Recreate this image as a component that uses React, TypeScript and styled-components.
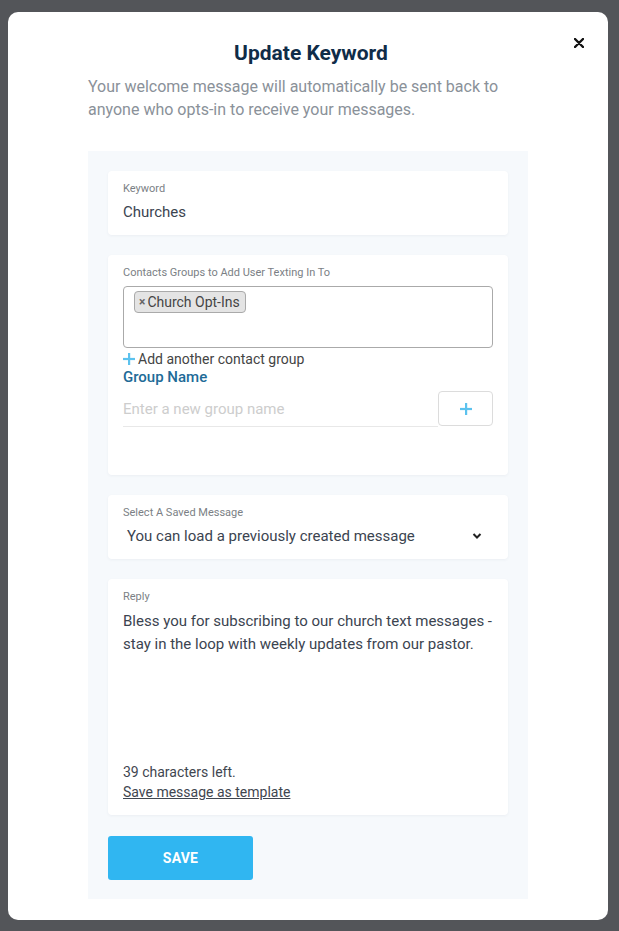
import React from 'react';
import styled, { createGlobalStyle } from 'styled-components';

const GlobalStyle = createGlobalStyle`
  html, body {
    margin: 0;
    padding: 0;
    background: #535559;
    font-family: Roboto, 'Liberation Sans', Arial, sans-serif;
  }
  * { box-sizing: border-box; }
`;

const Backdrop = styled.div`
  padding: 12px 11px 11px 8px;
  min-height: 931px;
`;

const Modal = styled.div`
  position: relative;
  width: 600px;
  height: 908px;
  background: #fff;
  border-radius: 10px;
  padding: 28px 80px 0;
`;

const CloseButton = styled.button`
  position: absolute;
  top: 24px;
  right: 22px;
  width: 14px;
  height: 14px;
  padding: 0;
  border: none;
  background: none;
  display: flex;
  align-items: center;
  justify-content: center;
`;

const Title = styled.h2`
  margin: 0 0 9px;
  text-align: center;
  font-size: 21px;
  line-height: 26px;
  font-weight: 700;
  color: #0f2c48;
  padding-left: 6px;
`;

const Subtitle = styled.p`
  margin: 0 0 30px;
  font-size: 16px;
  line-height: 23px;
  color: #8a9199;
`;

const Panel = styled.div`
  background: #f6f9fc;
  padding: 20px 20px 19px;
  display: flex;
  flex-direction: column;
  gap: 20px;
`;

const Card = styled.div`
  background: #fff;
  border-radius: 4px;
  box-shadow: 0 1px 3px rgba(30, 50, 80, 0.05);
  padding: 11px 15px 13px;
`;

const Label = styled.div`
  font-size: 11px;
  line-height: 14px;
  color: #7b7f85;
  margin-bottom: 6px;
`;

const ValueInput = styled.input`
  display: block;
  width: 100%;
  border: none;
  outline: none;
  padding: 0;
  font-family: inherit;
  font-size: 15px;
  line-height: 20px;
  height: 20px;
  color: #3b4450;
  background: transparent;
`;

const MultiBox = styled.div`
  height: 62px;
  border: 1px solid #aaa;
  border-radius: 4px;
  padding: 4px 10px;
  display: flex;
  align-items: flex-start;
`;

const Chip = styled.span`
  display: inline-flex;
  align-items: center;
  height: 22px;
  padding: 0 5px 0 4px;
  background: #e4e4e4;
  border: 1px solid #aaa;
  border-radius: 4px;
  font-size: 14px;
  color: #444;
  gap: 2px;
`;

const ChipRemove = styled.span`
  font-size: 12px;
  font-weight: 700;
  color: #666;
`;

const AddLink = styled.div`
  display: flex;
  align-items: center;
  gap: 3px;
  margin-top: 2px;
  font-size: 14px;
  line-height: 18px;
  color: #444;
`;

const GroupTitle = styled.div`
  font-size: 15px;
  line-height: 18px;
  font-weight: 500;
  color: #216a97;
  margin-bottom: 5px;
`;

const GroupRow = styled.div`
  display: flex;
  align-items: stretch;
  height: 36px;
  margin-bottom: 35px;
`;

const GroupInput = styled.input`
  flex: 1;
  border: none;
  border-bottom: 1px solid #e8e8e8;
  outline: none;
  padding: 0;
  font-family: inherit;
  font-size: 15px;
  color: #333;
  background: transparent;
  &::placeholder {
    color: #cdcdcd;
  }
`;

const AddButton = styled.button`
  width: 55px;
  height: 35px;
  background: #fff;
  border: 1px solid #dcdcdc;
  border-radius: 4px;
  display: flex;
  align-items: center;
  justify-content: center;
  padding: 0;
`;

const SelectBox = styled.div`
  display: flex;
  align-items: center;
  justify-content: space-between;
  padding: 0 11px 0 4px;
  height: 20px;
  font-size: 15px;
  color: #3b4450;
`;

const ReplyText = styled.div`
  font-size: 15px;
  line-height: 23px;
  color: #3b4450;
  white-space: nowrap;
  height: 152px;
`;

const Counter = styled.div`
  font-size: 14px;
  line-height: 20px;
  color: #3f4650;
`;

const TemplateLink = styled.a`
  display: inline-block;
  font-size: 14px;
  line-height: 20px;
  color: #3f4650;
  text-decoration: underline;
`;

const SaveButton = styled.button`
  align-self: flex-start;
  width: 145px;
  height: 44px;
  margin-top: 1px;
  border: none;
  border-radius: 3px;
  background: #30b6f1;
  color: #fff;
  font-family: inherit;
  font-size: 14px;
  font-weight: 700;
  letter-spacing: 0.2px;
`;

const PlusIcon: React.FC<{ size: number }> = ({ size }) => (
  <svg width={size} height={size} viewBox="0 0 12 12">
    <rect x="5" y="0" width="2.2" height="12" fill="#5cc2ee" />
    <rect x="0" y="4.9" width="12" height="2.2" fill="#5cc2ee" />
  </svg>
);

export default function App() {
  return (
    <>
      <GlobalStyle />
      <Backdrop>
        <Modal>
          <CloseButton aria-label="Close">
            <svg width="10" height="10" viewBox="0 0 10 10">
              <path d="M1 1 L9 9 M9 1 L1 9" stroke="#111" strokeWidth="2.4" strokeLinecap="round" />
            </svg>
          </CloseButton>
          <Title>Update Keyword</Title>
          <Subtitle>
            Your welcome message will automatically be sent back to anyone who opts-in to receive your
            messages.
          </Subtitle>
          <Panel>
            <Card>
              <Label>Keyword</Label>
              <ValueInput defaultValue="Churches" />
            </Card>

            <Card>
              <Label>Contacts Groups to Add User Texting In To</Label>
              <MultiBox>
                <Chip>
                  <ChipRemove>×</ChipRemove>Church Opt-Ins
                </Chip>
              </MultiBox>
              <AddLink>
                <PlusIcon size={12} />
                Add another contact group
              </AddLink>
              <GroupTitle>Group Name</GroupTitle>
              <GroupRow>
                <GroupInput placeholder="Enter a new group name" />
                <AddButton aria-label="Add group">
                  <PlusIcon size={12} />
                </AddButton>
              </GroupRow>
            </Card>

            <Card>
              <Label>Select A Saved Message</Label>
              <SelectBox>
                <span>You can load a previously created message</span>
                <svg width="10" height="8" viewBox="0 0 10 8">
                  <path d="M1.5 2 L5 5.5 L8.5 2" fill="none" stroke="#222" strokeWidth="2" />
                </svg>
              </SelectBox>
            </Card>

            <Card>
              <Label>Reply</Label>
              <ReplyText>
                Bless you for subscribing to our church text messages -<br />
                stay in the loop with weekly updates from our pastor.
              </ReplyText>
              <Counter>39 characters left.</Counter>
              <TemplateLink>Save message as template</TemplateLink>
            </Card>

            <SaveButton>SAVE</SaveButton>
          </Panel>
        </Modal>
      </Backdrop>
    </>
  );
}
